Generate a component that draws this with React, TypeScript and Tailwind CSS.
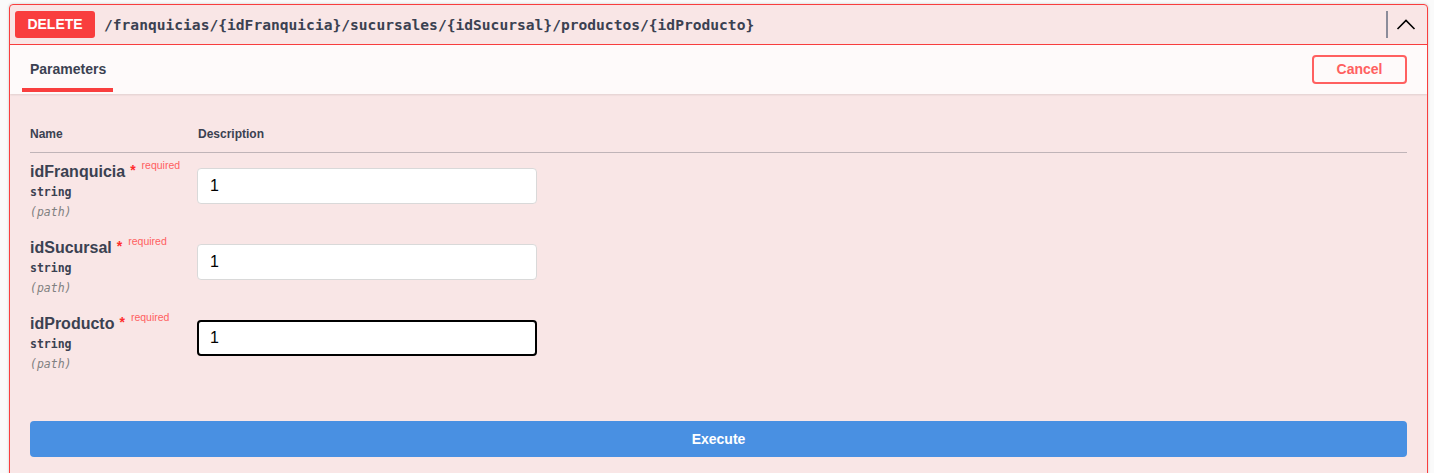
import React from "react";

type Param = {
  name: string;
  value: string;
  focused?: boolean;
};

const params: Param[] = [
  { name: "idFranquicia", value: "1" },
  { name: "idSucursal", value: "1" },
  { name: "idProducto", value: "1", focused: true },
];

const sans = "font-['Liberation_Sans',Arial,sans-serif]";
const mono = "font-['DejaVu_Sans_Mono','Liberation_Mono',monospace]";

function ParamRow({ p }: { p: Param }) {
  return (
    <div className="flex h-[76px] pt-[10px]">
      {/* Name column */}
      <div className="w-[167px] shrink-0">
        <div className={`${sans} flex items-start h-[18px] leading-[18px]`}>
          <span className="text-[16px] font-bold text-[#3b4151]">{p.name}</span>
          <span className="ml-[5px] text-[14px] font-bold text-[#ff2d2d] leading-[16px] -mt-[1px]">*</span>
          <span className="ml-[6px] text-[10.5px] font-normal text-[#ff6060] leading-[12px] -mt-[4px]">
            required
          </span>
        </div>
        <div className={`${mono} mt-[2px] text-[11.5px] font-bold leading-[18px] text-[#3b4151]`}>
          string
        </div>
        <div className={`${mono} mt-[2px] text-[11.5px] italic font-normal leading-[18px] text-[#808080]`}>
          (path)
        </div>
      </div>
      {/* Description column */}
      <div className="pt-[5px]">
        <div
          className={
            p.focused
              ? "w-[340px] h-[36px] rounded-[4px] border-2 border-black bg-white flex items-center px-[11px]"
              : "w-[340px] h-[36px] rounded-[4px] border border-[#d9d9d9] bg-white flex items-center px-[12px]"
          }
        >
          <span className={`${sans} text-[16px] text-black`}>{p.value}</span>
        </div>
      </div>
    </div>
  );
}

export default function App() {
  return (
    <div className="min-h-screen bg-[#fafafa] pl-[9px] pr-[6px] pt-[4px]">
      <div className="rounded-[4px] border border-[#f93e3e] bg-[#f93e3e]/10 shadow-[0_0_3px_rgba(0,0,0,0.19)] overflow-hidden">
        {/* =================== Summary =================== */}
        <div className="flex items-center h-[40px] px-[5px] border-b border-[#f93e3e]">
          <span
            className={`${sans} w-[80px] h-[27px] flex items-center justify-center rounded-[3px] bg-[#f93e3e] text-white text-[14px] font-bold`}
          >
            DELETE
          </span>
          <span className={`${mono} pl-[9px] text-[14.6px] font-bold text-[#3b4151]`}>
            /franquicias/{"{idFranquicia}"}/sucursales/{"{idSucursal}"}/productos/{"{idProducto}"}
          </span>
          <div className="ml-auto flex items-center h-full">
            <div className="w-[2px] h-[27px] bg-[#8c8c9a]" />
            <svg
              className="ml-[8px] mr-[6px]"
              width="20"
              height="20"
              viewBox="0 0 20 20"
              fill="none"
            >
              <path d="M1.5 14 L10 5.5 L18.5 14" stroke="#000" strokeWidth="1.6" />
            </svg>
          </div>
        </div>

        {/* =================== Section header =================== */}
        <div className="flex items-center h-[49px] px-[20px] bg-white/80 shadow-[0_1px_2px_rgba(0,0,0,0.1)]">
          <div className="relative h-full flex items-center">
            <span className={`${sans} text-[14px] font-bold text-[#3b4151]`}>Parameters</span>
            <span className="absolute left-[-8px] right-[-7px] top-[43px] h-[4px] bg-[#f93e3e]" />
          </div>
          <button
            className={`${sans} ml-auto w-[95px] h-[29px] rounded-[4px] border-2 border-[#ff6060] text-[#ff6060] text-[14px] font-bold bg-transparent`}
          >
            Cancel
          </button>
        </div>

        {/* =================== Parameters table =================== */}
        <div className="px-[20px] pt-[21px]">
          <div className="flex h-[38px] items-center border-b border-[#3b4151]/30">
            <div className={`${sans} w-[168px] text-[12px] font-bold text-[#3b4151]`}>Name</div>
            <div className={`${sans} text-[12px] font-bold text-[#3b4151]`}>Description</div>
          </div>
          {params.map((p) => (
            <ParamRow key={p.name} p={p} />
          ))}
        </div>

        {/* =================== Execute =================== */}
        <div className="px-[20px] pt-[40px] pb-[30px]">
          <button
            className={`${sans} w-full h-[36px] rounded-[4px] bg-[#4990e2] text-white text-[14px] font-bold`}
          >
            Execute
          </button>
        </div>
      </div>
    </div>
  );
}
